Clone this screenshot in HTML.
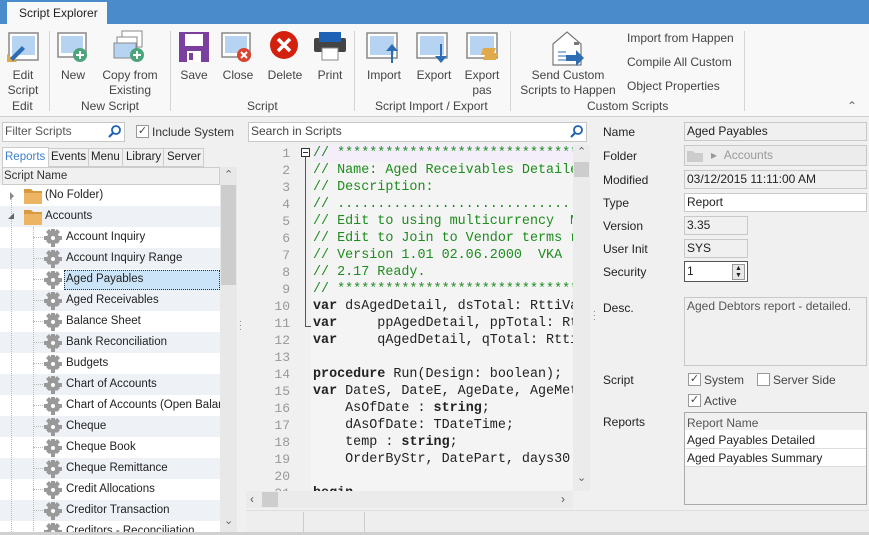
<!DOCTYPE html>
<html><head><meta charset="utf-8"><style>
*{box-sizing:border-box;margin:0;padding:0}
body{width:869px;height:535px;overflow:hidden;background:#f0f0f0;font-family:"Liberation Sans",sans-serif;font-size:12px;color:#222;position:relative}
.a{position:absolute}
.t{position:absolute;white-space:nowrap}
.btn{position:absolute;text-align:center;color:#444;font-size:12px;line-height:15px}
.grp{position:absolute;top:99px;color:#444;font-size:12px}
.sep{position:absolute;top:31px;width:1px;height:80px;background:#d4d4d4}
.row{position:absolute;left:0;width:220px;height:21px;line-height:21px}
.tree .t{font-size:11.5px}
.code{position:absolute;left:313px;font-family:"Liberation Mono",monospace;font-size:13.4px;font-weight:bold;white-space:pre;line-height:17px}
.ln{position:absolute;left:246px;width:44px;text-align:right;font-family:"Liberation Mono",monospace;font-size:13px;color:#999;line-height:17px}
.inp{position:absolute;background:#fff;border:1px solid #c8c8c8;padding-left:2px;line-height:16px;height:19px}
.lab{position:absolute;left:603px}
.cb{position:absolute;width:13px;height:13px;border:1px solid #999;background:#fff;font-size:11px;line-height:11px;text-align:center;color:#444}
.dh{position:absolute;left:33px;width:10px;border-top:1px dotted #bbb}
</style></head><body>
<div class="a" style="left:0;top:0;width:869px;height:24px;background:#4a8ccb"></div>
<div class="a" style="left:7px;top:2px;width:100px;height:23px;background:#f8f8f8"></div>
<div class="t" style="left:19px;top:6px;font-size:12px;color:#222">Script Explorer</div>
<div class="a" style="left:0;top:24px;width:869px;height:93px;background:#f8f8f8;border-bottom:1px solid #d0d0d0"></div>
<svg class="a" style="left:0;top:28px" width="869" height="40">
<rect x="9" y="5" width="29" height="27" fill="#fff" stroke="#888" stroke-width="1.5"/><rect x="12" y="8" width="23" height="19" fill="#b7d3f2"/><path d="M7 34 L7 26 L17 34Z" fill="#e0a94a"/><path d="M10 30 L22 18 L25 21 L13 33Z" fill="#2e6db3"/>
<rect x="58" y="5" width="28" height="24" fill="#fff" stroke="#888" stroke-width="1.5"/><rect x="61" y="8" width="22" height="17" fill="#b7d3f2"/><circle cx="80" cy="27" r="7" fill="#4aa57a"/><path d="M76 27h8M80 23v8" stroke="#fff" stroke-width="2"/>
<rect x="122" y="3" width="20" height="16" fill="#fff" stroke="#888"/><rect x="117" y="9" width="20" height="16" fill="#fff" stroke="#888"/><rect x="114" y="15" width="22" height="15" fill="#b7d3f2" stroke="#888"/><circle cx="137" cy="27" r="7" fill="#4aa57a"/><path d="M133 27h8M137 23v8" stroke="#fff" stroke-width="2"/>
<rect x="179" y="4" width="30" height="30" fill="#7b3fa0"/><rect x="185" y="6" width="18" height="12" fill="#fff"/><rect x="187" y="23" width="14" height="11" fill="#fff"/><rect x="189" y="25" width="4" height="7" fill="#7b3fa0"/>
<rect x="222" y="5" width="28" height="24" fill="#fff" stroke="#888" stroke-width="1.5"/><rect x="225" y="8" width="22" height="17" fill="#b7d3f2"/><circle cx="244" cy="27" r="7" fill="#d9432f"/><path d="M241 24l6 6M247 24l-6 6" stroke="#fff" stroke-width="2"/>
<circle cx="284" cy="17" r="14" fill="#d4200f"/><path d="M278 11l12 12M290 11l-12 12" stroke="#fff" stroke-width="3.5"/>
<rect x="314" y="10" width="32" height="14" rx="2" fill="#444"/><rect x="319" y="4" width="22" height="10" fill="#1e62b6"/><rect x="322" y="20" width="16" height="12" fill="#fff" stroke="#888"/>
<rect x="367" y="5" width="30" height="25" fill="#fff" stroke="#888" stroke-width="1.5"/><rect x="370" y="8" width="24" height="19" fill="#b7d3f2"/><path d="M391 35V23h-5l6-7 6 7h-5v12" fill="#2e6db3"/>
<rect x="417" y="5" width="30" height="25" fill="#fff" stroke="#888" stroke-width="1.5"/><rect x="420" y="8" width="24" height="19" fill="#b7d3f2"/><path d="M440 16v12h-5l6 7 6-7h-5V16" fill="#2e6db3"/>
<rect x="467" y="5" width="30" height="25" fill="#fff" stroke="#888" stroke-width="1.5"/><rect x="470" y="8" width="24" height="19" fill="#b7d3f2"/><path d="M483 20h13l-2 5h4l-2 7h-13l2-5h-4z" fill="#e0a94a"/>
<path d="M553 16 L567 4 L581 16 V37 H553Z" fill="#fff" stroke="#777" stroke-width="1.2"/><rect x="574" y="14" width="5" height="3" fill="#777"/><path d="M558 24h8M558 28h8M558 32h8" stroke="#2e6db3"/><path d="M566 27h10v-5l8 8-8 8v-5h-10z" fill="#2e6db3"/>
</svg>
<div class="btn" style="left:0;top:68px;width:46px">Edit<br>Script</div>
<div class="btn" style="left:55px;top:68px;width:36px">New</div>
<div class="btn" style="left:98px;top:68px;width:64px">Copy from<br>Existing</div>
<div class="btn" style="left:175px;top:68px;width:38px">Save</div>
<div class="btn" style="left:218px;top:68px;width:40px">Close</div>
<div class="btn" style="left:264px;top:68px;width:42px">Delete</div>
<div class="btn" style="left:312px;top:68px;width:36px">Print</div>
<div class="btn" style="left:362px;top:68px;width:44px">Import</div>
<div class="btn" style="left:412px;top:68px;width:44px">Export</div>
<div class="btn" style="left:460px;top:68px;width:44px">Export<br>pas</div>
<div class="btn" style="left:516px;top:68px;width:104px">Send Custom<br>Scripts to Happen</div>
<div class="t" style="left:627px;top:31px;color:#444">Import from Happen</div>
<div class="t" style="left:627px;top:55px;color:#444">Compile All Custom</div>
<div class="t" style="left:627px;top:79px;color:#444">Object Properties</div>
<div class="grp" style="left:12px">Edit</div>
<div class="grp" style="left:81px">New Script</div>
<div class="grp" style="left:247px">Script</div>
<div class="grp" style="left:375px">Script Import / Export</div>
<div class="grp" style="left:587px">Custom Scripts</div>
<div class="sep" style="left:49px"></div><div class="sep" style="left:170px"></div><div class="sep" style="left:354px"></div><div class="sep" style="left:510px"></div><div class="sep" style="left:744px"></div>
<div class="t" style="left:847px;top:99px;color:#666;font-size:12px">&#8963;</div>
<!-- left panel -->
<div class="inp" style="left:2px;top:122px;width:123px;height:20px;color:#555">Filter Scripts</div>
<svg class="a" style="left:108px;top:124px" width="14" height="14"><circle cx="8" cy="6" r="4" fill="none" stroke="#1e62b6" stroke-width="1.8"/><path d="M5 9l-4 4" stroke="#1e62b6" stroke-width="2.2"/></svg>
<div class="cb" style="left:136px;top:125px">✓</div>
<div class="t" style="left:152px;top:125px;color:#333">Include System</div>
<div class="a" style="left:2px;top:147px;width:47px;height:21px;background:#fff;border:1px solid #ccc;border-bottom:none"></div>
<div class="t" style="left:5px;top:151px;color:#3d7fc9;font-size:11.5px">Reports</div>
<div class="a" style="left:48px;top:148px;width:156px;height:19px;background:#f0f0f0;border:1px solid #ccc"></div>
<div class="t" style="left:51px;top:151px;font-size:11.5px">Events</div>
<div class="a" style="left:88px;top:148px;width:1px;height:19px;background:#ccc"></div>
<div class="t" style="left:91px;top:151px;font-size:11.5px">Menu</div>
<div class="a" style="left:122px;top:148px;width:1px;height:19px;background:#ccc"></div>
<div class="t" style="left:126px;top:151px;font-size:11.5px">Library</div>
<div class="a" style="left:163px;top:148px;width:1px;height:19px;background:#ccc"></div>
<div class="t" style="left:167px;top:151px;font-size:11.5px">Server</div>
<div class="a" style="left:2px;top:167px;width:218px;height:18px;background:#f0f0f0;border:1px solid #ccc"></div>
<div class="t" style="left:4px;top:170px;color:#333;font-size:11.5px">Script Name</div>
<div class="a" style="left:220px;top:167px;width:17px;height:365px;background:#e8e8e8"></div>
<div class="a" style="left:221px;top:185px;width:15px;height:100px;background:#cdcdcd"></div>
<div class="t" style="left:224px;top:168px;color:#666;font-size:11px">&#8963;</div>
<div class="t" style="left:224px;top:514px;color:#666;font-size:11px">&#8964;</div>
<div class="a tree" style="left:0;top:185px;width:220px;height:347px;background:#fff;overflow:hidden">
<div class="row" style="top:0"></div>
<div class="row" style="top:21px;background:#eef2f7"></div>
<div class="row" style="top:63px;background:#eef2f7"></div>
<div class="row" style="top:105px;background:#eef2f7"></div>
<div class="row" style="top:147px;background:#eef2f7"></div>
<div class="row" style="top:189px;background:#eef2f7"></div>
<div class="row" style="top:231px;background:#eef2f7"></div>
<div class="row" style="top:273px;background:#eef2f7"></div>
<div class="row" style="top:315px;background:#eef2f7"></div>
<div class="a" style="left:64px;top:85px;width:156px;height:20px;background:#cce4f7;border:1px dotted #333"></div>
<div class="a" style="left:11px;top:11px;width:0;height:340px;border-left:1px dotted #bbb"></div>
<div class="a" style="left:33px;top:42px;width:0;height:310px;border-left:1px dotted #bbb"></div>
<div class="dh" style="top:52px"></div><div class="dh" style="top:73px"></div><div class="dh" style="top:94px"></div><div class="dh" style="top:115px"></div><div class="dh" style="top:136px"></div><div class="dh" style="top:157px"></div><div class="dh" style="top:178px"></div><div class="dh" style="top:199px"></div><div class="dh" style="top:220px"></div><div class="dh" style="top:241px"></div><div class="dh" style="top:262px"></div><div class="dh" style="top:283px"></div><div class="dh" style="top:304px"></div><div class="dh" style="top:325px"></div>
<svg class="a" style="left:0;top:0" width="220" height="360">
<path d="M10 7l4 4-4 4z" fill="#888"/><path d="M14 28v6h-6z" fill="#666"/>
<path d="M24 4h7l2 2h9v13H24z" fill="#ebb563"/><path d="M24 4h7l2 2h9v2H24z" fill="#d79a3e"/>
<path d="M24 25h7l2 2h9v13H24z" fill="#ebb563"/><path d="M24 25h7l2 2h9v2H24z" fill="#d79a3e"/>
<g fill="#999">
<g id="g"><circle cx="53" cy="53" r="6"/><path d="M51 44h4v18h-4zM44 51h18v4H44zM46 47l3-3 11 12-3 3zM57 44l3 3-11 12-3-3z"/><circle cx="53" cy="53" r="2" fill="#fff"/></g>
<use href="#g" y="21"/><use href="#g" y="42"/><use href="#g" y="63"/><use href="#g" y="84"/><use href="#g" y="105"/><use href="#g" y="126"/><use href="#g" y="147"/><use href="#g" y="168"/><use href="#g" y="189"/><use href="#g" y="210"/><use href="#g" y="231"/><use href="#g" y="252"/><use href="#g" y="273"/><use href="#g" y="294"/>
</g>
</svg>
<div class="t" style="left:45px;top:4px">(No Folder)</div>
<div class="t" style="left:45px;top:25px">Accounts</div>
<div class="t" style="left:66px;top:46px">Account Inquiry</div>
<div class="t" style="left:66px;top:67px">Account Inquiry Range</div>
<div class="t" style="left:66px;top:88px">Aged Payables</div>
<div class="t" style="left:66px;top:109px">Aged Receivables</div>
<div class="t" style="left:66px;top:130px">Balance Sheet</div>
<div class="t" style="left:66px;top:151px">Bank Reconciliation</div>
<div class="t" style="left:66px;top:172px">Budgets</div>
<div class="t" style="left:66px;top:193px">Chart of Accounts</div>
<div class="t" style="left:66px;top:214px">Chart of Accounts (Open Balanc</div>
<div class="t" style="left:66px;top:235px">Cheque</div>
<div class="t" style="left:66px;top:256px">Cheque Book</div>
<div class="t" style="left:66px;top:277px">Cheque Remittance</div>
<div class="t" style="left:66px;top:298px">Credit Allocations</div>
<div class="t" style="left:66px;top:319px">Creditor Transaction</div>
<div class="t" style="left:66px;top:340px">Creditors - Reconciliation</div>
</div>
<div class="t" style="left:239px;top:318px;color:#888;font-size:10px;line-height:4px">.<br>.<br>.</div>
<div class="t" style="left:593px;top:308px;color:#888;font-size:10px;line-height:4px">.<br>.<br>.</div>
<!-- code -->
<div class="inp" style="left:248px;top:122px;width:339px;height:20px;color:#444">Search in Scripts</div>
<svg class="a" style="left:570px;top:124px" width="14" height="14"><circle cx="8" cy="6" r="4" fill="none" stroke="#1e62b6" stroke-width="1.8"/><path d="M5 9l-4 4" stroke="#1e62b6" stroke-width="2.2"/></svg>
<div class="a" style="left:246px;top:145px;width:344px;height:346px;background:#f4f4f4;overflow:hidden">
<div class="a" style="left:0;top:0;width:65px;height:346px;background:#f0f0f0"></div>
<div class="a" style="left:67px;top:0;width:260px;height:17px;background:#f3eefa"></div>
<div class="a" style="left:55px;top:3px;width:9px;height:9px;border:1px solid #333;background:#fff"></div>
<div class="a" style="left:57px;top:7px;width:5px;height:1px;background:#333"></div>
<div class="a" style="left:59px;top:12px;width:1px;height:170px;background:#555"></div>
<div class="a" style="left:59px;top:181px;width:6px;height:1px;background:#555"></div>
<div class="a" style="left:327px;top:0;width:17px;height:346px;background:#ebebeb"></div>
<div class="a" style="left:328px;top:17px;width:15px;height:15px;background:#cdcdcd"></div>
<div class="t" style="left:331px;top:0;color:#666;font-size:11px">&#8963;</div>
<div class="t" style="left:331px;top:326px;color:#666;font-size:11px">&#8964;</div>
</div>
<div class="ln" style="top:145px">1<br>2<br>3<br>4<br>5<br>6<br>7<br>8<br>9<br>10<br>11<br>12<br>13<br>14<br>15<br>16<br>17<br>18<br>19<br>20<br>21</div>
<div class="a" style="left:312px;top:145px;width:261px;height:346px;overflow:hidden">
<div class="code" style="left:1px;top:0;color:#1e8c1e;font-weight:normal">// ************************************
// Name: Aged Receivables Detailed
// Description:
// ....................................
// Edit to using multicurrency  M
// Edit to Join to Vendor terms r
// Version 1.01 02.06.2000  VKA
// 2.17 Ready.
// ************************************</div>
<div class="code" style="left:1px;top:153px;color:#222;font-weight:normal"><b>var</b> dsAgedDetail, dsTotal: RttiVa
<b>var</b>     ppAgedDetail, ppTotal: Rt
<b>var</b>     qAgedDetail, qTotal: Rtti

<b>procedure</b> Run(Design: boolean);
<b>var</b> DateS, DateE, AgeDate, AgeMet
    AsOfDate : <b>string</b>;
    dAsOfDate: TDateTime;
    temp : <b>string</b>;
    OrderByStr, DatePart, days30
 
<b>begin</b></div>
</div>
<div class="a" style="left:246px;top:491px;width:327px;height:17px;background:#ebebeb"></div>
<div class="a" style="left:262px;top:492px;width:16px;height:15px;background:#cdcdcd"></div>
<div class="t" style="left:250px;top:492px;color:#555">‹</div>
<div class="t" style="left:561px;top:492px;color:#555">›</div>
<div class="a" style="left:246px;top:510px;width:623px;height:23px;background:#eeeeee;border-top:1px solid #ddd"></div>
<div class="a" style="left:0;top:532px;width:869px;height:3px;background:#d0d0d0"></div>
<div class="a" style="left:303px;top:512px;width:1px;height:20px;background:#ccc"></div>
<div class="a" style="left:364px;top:512px;width:1px;height:20px;background:#ccc"></div>
<!-- right panel -->
<div class="lab" style="top:125px">Name</div>
<div class="inp" style="left:684px;top:122px;width:183px;background:#f0f0f0">Aged Payables</div>
<div class="lab" style="top:149px">Folder</div>
<div class="inp" style="left:684px;top:145px;width:183px;height:21px;background:#ececec;color:#999;padding-left:26px;line-height:19px">▸ &nbsp;Accounts</div>
<svg class="a" style="left:687px;top:150px" width="18" height="12"><path d="M0 1h6l2 2h8v9H0z" fill="#ccc"/></svg>
<div class="lab" style="top:173px">Modified</div>
<div class="inp" style="left:684px;top:170px;width:183px;background:#f0f0f0">03/12/2015 11:11:00 AM</div>
<div class="lab" style="top:196px">Type</div>
<div class="inp" style="left:684px;top:193px;width:183px">Report</div>
<div class="lab" style="top:219px">Version</div>
<div class="inp" style="left:684px;top:216px;width:64px;background:#f0f0f0">3.35</div>
<div class="lab" style="top:242px">User Init</div>
<div class="inp" style="left:684px;top:239px;width:64px;background:#f0f0f0">SYS</div>
<div class="lab" style="top:265px">Security</div>
<div class="inp" style="left:684px;top:261px;width:64px;height:21px;border-color:#555;line-height:18px">1</div>
<div class="a" style="left:732px;top:264px;width:13px;height:16px;background:#e8e8e8;border:1px solid #999;font-size:7px;line-height:7px;text-align:center">▲<br>▼</div>
<div class="lab" style="top:301px">Desc.</div>
<div class="inp" style="left:684px;top:297px;width:183px;height:69px;background:#f0f0f0;line-height:16px;color:#555">Aged Debtors report - detailed.</div>
<div class="lab" style="top:373px">Script</div>
<div class="cb" style="left:688px;top:373px">✓</div><div class="t" style="left:704px;top:373px;color:#444">System</div>
<div class="cb" style="left:757px;top:373px"></div><div class="t" style="left:773px;top:373px;color:#444">Server Side</div>
<div class="cb" style="left:688px;top:394px">✓</div><div class="t" style="left:704px;top:394px;color:#444">Active</div>
<div class="lab" style="top:415px">Reports</div>
<div class="a" style="left:684px;top:412px;width:183px;height:93px;background:#f0f0f0;border:1px solid #aaa"></div>
<div class="t" style="left:687px;top:416px;color:#555">Report Name</div>
<div class="a" style="left:685px;top:430px;width:181px;height:36px;background:#fff"></div>
<div class="a" style="left:685px;top:448px;width:181px;height:1px;background:#ddd"></div>
<div class="a" style="left:685px;top:466px;width:181px;height:1px;background:#ddd"></div>
<div class="t" style="left:687px;top:433px">Aged Payables Detailed</div>
<div class="t" style="left:687px;top:451px">Aged Payables Summary</div>
</body></html>
